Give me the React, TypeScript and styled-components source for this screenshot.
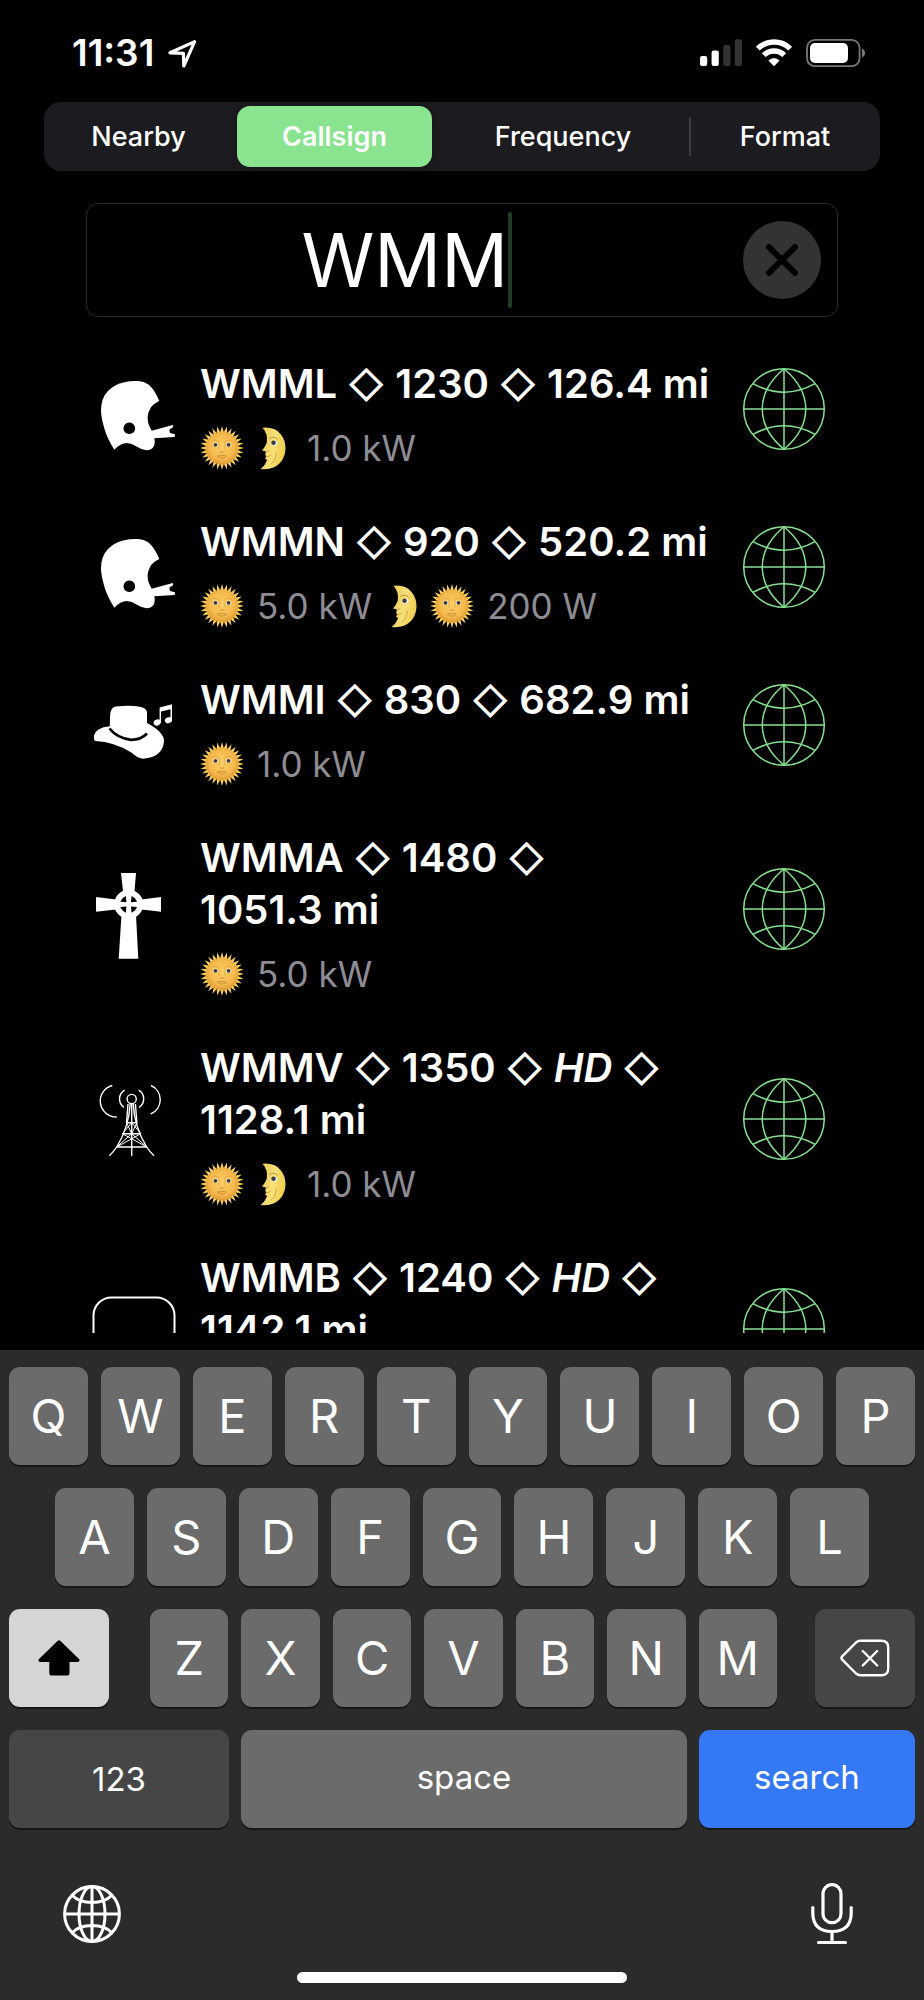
import React from 'react';
import styled, { createGlobalStyle } from 'styled-components';

const GlobalStyle = createGlobalStyle`
  * { box-sizing: border-box; }
  body { margin: 0; background: #000; }
  button, input { font: inherit; color: inherit; border: 0; padding: 0; margin: 0; background: none; }
  button { cursor: pointer; }
  svg { display: block; flex: none; overflow: visible; }
`;

const Screen = styled.div`
  display: flex;
  flex-direction: column;
  height: 100vh;
  background: #000;
  color: #fff;
  font-family: Inter, 'Noto Sans', sans-serif;
`;

const StatusBar = styled.header`
  display: flex;
  align-items: center;
  flex: none;
  height: 102px;
  padding: 3px 59px 0 72px;
`;

const Clock = styled.time`
  font-size: 37px;
  font-weight: 600;
  line-height: 44px;
  margin-right: 12px;
`;

const StatusIcons = styled.div`
  display: flex;
  align-items: center;
  gap: 14px;
  margin-left: auto;
`;

const Segments = styled.nav`
  display: grid;
  grid-template-columns: 189fr 203fr 254fr 190fr;
  flex: none;
  height: 69px;
  margin: 0 44px;
  padding: 4px 0;
  border-radius: 17px;
  background: #1c1b20;
`;

const Segment = styled.button<{ $active?: boolean; $divided?: boolean }>`
  position: relative;
  margin: 0 4px;
  border-radius: 13px;
  background: ${p => (p.$active ? '#8ae38f' : 'transparent')};
  box-shadow: ${p => (p.$active ? '0 0 8px rgba(0, 0, 0, 0.3)' : 'none')};
  font-size: 27px;
  line-height: 36px;
  font-weight: ${p => (p.$active ? 600 : 500)};

  &::before {
    content: '';
    display: ${p => (p.$divided ? 'block' : 'none')};
    position: absolute;
    left: -5px;
    top: 11px;
    bottom: 11px;
    width: 2px;
    background: #3e3d43;
  }
`;

const SearchBox = styled.form`
  display: flex;
  align-items: center;
  flex: none;
  height: 114px;
  margin: 32px 86px 0;
  padding: 0 16px;
  border: 1px solid #2a2a2a;
  border-radius: 12px;
`;

const Field = styled.label`
  display: flex;
  flex: 1;
  align-items: center;
  justify-content: center;
  padding-right: 34px;
`;

const SearchInput = styled.input`
  width: 208px;
  height: 96px;
  outline: none;
  font-size: 74px;
  text-align: right;
  caret-color: transparent;
`;

const Caret = styled.span`
  width: 4px;
  height: 96px;
  border-radius: 2px;
  background: #213a25;
`;

const ClearButton = styled.button`
  width: 78px;
  height: 78px;
  border-radius: 50%;
  background: #333;
`;

const StationList = styled.ul`
  flex: 1 1 0;
  min-height: 0;
  overflow: hidden;
  margin: 13px 0 17px;
  padding: 0 98px 0 92px;
  list-style: none;
`;

const Station = styled.li`
  display: flex;
  align-items: center;
`;

const StationText = styled.div`
  flex: 1;
  min-width: 0;
  padding: 28px 16px 16px 24px;
`;

const StationTitle = styled.h2`
  margin: 0 0 14px;
  font-size: 40px;
  line-height: 52px;
  font-weight: 600;
`;

const Diamond = styled.span`
  font-size: 36px;
  font-weight: 500;
  line-height: 1;
`;

const PowerLine = styled.div`
  display: flex;
  align-items: center;
  gap: 13px;
  height: 48px;
  color: #8e8d93;
  font-size: 35px;
  line-height: 48px;
  white-space: nowrap;
`;

const EmojiGroup = styled.span<{ $gap: number }>`
  display: flex;
  gap: ${p => p.$gap}px;
`;

const GlobeLink = styled.a`
  display: block;
  color: #86e290;
`;

const Keyboard = styled.section`
  display: flex;
  flex-direction: column;
  flex: none;
  gap: 23px;
  padding: 17px 9px;
  background: #2b2b2b;
`;

const KeyRow = styled.div<{ $inset?: number; $gap?: number }>`
  display: flex;
  gap: ${p => p.$gap ?? 13}px;
  padding: 0 ${p => p.$inset ?? 0}px;
`;

const LetterGroup = styled.div`
  display: flex;
  flex: 1;
  gap: 13px;
  margin: 0 25px 0 28px;
`;

const keyTones = {
  letter: '#6b6b6b',
  dark: '#464646',
  light: '#d5d5d5',
  blue: '#3478f6',
};

const Key = styled.button<{ $tone?: keyof typeof keyTones; $grow?: number; $width?: number; $word?: boolean }>`
  display: flex;
  align-items: center;
  justify-content: center;
  flex: ${p => (p.$width ? `0 0 ${p.$width}px` : `${p.$grow ?? 1} 1 0`)};
  min-width: 0;
  height: 98px;
  padding-bottom: ${p => (p.$word ? 4 : 0)}px;
  border-radius: 11px;
  background: ${p => keyTones[p.$tone ?? 'letter']};
  box-shadow: 0 2px 0 #171717;
  font-size: ${p => (p.$grow ? 33 : 47)}px;
  line-height: 56px;
`;

const KeyboardFooter = styled.div`
  display: flex;
  align-items: center;
  justify-content: space-between;
  height: 76px;
  margin-top: 25px;
  padding: 0 62px 0 54px;
`;

const HomeIndicator = styled.div`
  align-self: center;
  width: 330px;
  max-width: 100%;
  height: 11px;
  margin-top: -3px;
  border-radius: 6px;
  background: #fff;
`;

const LocationIcon = () => (
  <svg width="32" height="32" viewBox="0 0 32 32" fill="none" stroke="#fff" strokeWidth="3.2" strokeLinejoin="round">
    <path d="M28.6 4.6 4 15.8 17.4 16.4 17.8 29Z" />
  </svg>
);

const SignalIcon = () => (
  <svg width="42" height="28" viewBox="0 0 42 28">
    <rect x="0" y="17" width="7.2" height="10" rx="2" fill="#fff" />
    <rect x="11.6" y="11.5" width="7.2" height="15.5" rx="2" fill="#fff" />
    <rect x="23.2" y="6" width="7.2" height="21" rx="2" fill="#333" />
    <rect x="34.8" y="0.3" width="7.2" height="26.7" rx="2" fill="#333" />
  </svg>
);

const WifiIcon = () => (
  <svg width="36" height="28" viewBox="0 0 36 28">
    <g fill="none" stroke="#fff" strokeWidth="5.4">
      <path d="M1.8 9.6A23 23 0 0 1 34.2 9.6" />
      <path d="M7.8 16.2A14.4 14.4 0 0 1 28.2 16.2" />
    </g>
    <path d="M12.4 21.6Q18 16.4 23.6 21.6L18.8 26.6Q18 27.4 17.2 26.6Z" fill="#fff" />
  </svg>
);

const BatteryIcon = () => (
  <svg width="59" height="28" viewBox="0 0 59 28">
    <rect x="1" y="0.8" width="52.6" height="26.4" rx="8" fill="none" stroke="#777" strokeWidth="1.8" />
    <rect x="4" y="4" width="38" height="20" rx="5" fill="#fff" />
    <path d="M56 9.5V18.5Q59 17 59 14T56 9.5Z" fill="#777" />
  </svg>
);

const ClearIcon = () => (
  <svg width="78" height="78" viewBox="0 0 78 78" stroke="#000" strokeWidth="6" strokeLinecap="round">
    <path d="M26 26 52 52M52 26 26 52" />
  </svg>
);

const WireGlobe = () => (
  <svg width="84" height="84" viewBox="0 0 84 84" fill="none" stroke="currentColor" strokeWidth="1.5">
    <circle cx="42" cy="42" r="40.3" />
    <path d="M42 1.7V82.3M1.7 42H82.3" />
    <path d="M42 1.7C13 26 13 58 42 82.3C71 58 71 26 42 1.7" />
    <path d="M11 16.7Q42 33.7 73 16.7M11 67.3Q42 50.3 73 67.3" />
  </svg>
);

const HelmetIcon = () => (
  <svg width="84" height="84" viewBox="0 0 84 84" fill="#fff">
    <path
      fillRule="evenodd"
      d="M22.3 82.7Q15 71 12.5 62Q9 50 9 44Q9 31 16 24Q22 17.5 31.3 15.4Q39 13.6 46.3 14Q52 14.4 56.5 17.4Q63 23 67.3 34Q60.5 37 58 42Q53.5 50 57.3 59L59.7 63.7L80.7 58L81.3 60L77.3 62.7L78 66L83 67.3L82.7 70L62.3 71.3Q64.5 82.5 54.7 83.3Q49 82.5 44.5 79.5Q33 71 22.3 82.7ZM37.3 55.5a5.8 5.8 0 1 0 .01 0Z"
    />
  </svg>
);

const HatIcon = () => (
  <svg width="84" height="84" viewBox="0 0 84 84" fill="#fff">
    <path d="M17.8 43.2L18 33Q18.5 24 24 23.6Q38 21.5 49 24Q55 25.5 55 29.5V40Q72 49 72 58Q71 74 51.3 75.7Q46 75.5 39.7 69.7Q23 59 3 58Q1.5 56 2 52.5Q4 44.5 17.8 43.2Z" />
    <path d="M17.5 45.5Q25 55 39 56.8Q49 56.8 55 50.5" fill="none" stroke="#000" strokeWidth="2.8" />
    <ellipse cx="65.2" cy="39.5" rx="3.7" ry="2.9" transform="rotate(-25 65.2 39.5)" />
    <ellipse cx="76.5" cy="37.2" rx="3.7" ry="2.9" transform="rotate(-25 76.5 37.2)" />
    <path d="M67.6 24.5 80 21.3V37.5H78.5V26.2L69 28.6V39.5H67.6Z" />
  </svg>
);

const CrossIcon = () => (
  <svg width="84" height="84" viewBox="0 0 84 84">
    <path d="M29 6H44L42.5 24H31Z M4 30 24 32.5V42.5L4 44.7Z M69 30 49.5 32.5V42.5L69 44.7Z M29.5 48H44L46.3 91.7H26.7Z" fill="#fff" />
    <circle cx="36.7" cy="37.3" r="11.6" fill="#000" stroke="#fff" strokeWidth="5.8" />
    <path d="M33.6 26H39.8L38.8 37.3 39.8 49H33.6L34.6 37.3ZM26 34.5 36.7 35.4 47.5 34.5V40.2L36.7 39.2 26 40.2Z" fill="#fff" />
  </svg>
);

const TowerIcon = () => (
  <svg width="84" height="84" viewBox="0 0 84 84" fill="none" stroke="#fff" strokeWidth="1.4">
    <circle cx="39.7" cy="22" r="4.6" />
    <path d="M32.7 13.2A10 10 0 0 0 32 30.3M46.7 13.2A10 10 0 0 1 47 30.3" />
    <path d="M20.3 8.5A16 16 0 0 0 24.7 40M59 8.5A15.5 15.5 0 0 1 58.7 37" />
    <path d="M38.2 27Q37 50 24.7 70Q21.5 75 17.3 78.7M41.2 27Q42.4 50 54.7 70Q57.9 75 62 78.7" />
    <path d="M39.7 27V78.7M36 27 34.5 45.7M43.4 27 44.9 45.7M34 45.7H45.4M30.5 56.7H48.9M24.7 70H54.7" />
    <path d="M34.5 45.7 39.7 56.7 44.9 45.7M30.5 56.7 54.7 70M48.9 56.7 24.7 70M30.5 56.7 39.7 45.7 48.9 56.7M24.7 70 39.7 56.7 54.7 70" strokeWidth="1" />
  </svg>
);

const ScreenIcon = () => (
  <svg width="84" height="84" viewBox="0 0 84 84" fill="none" stroke="#fff" strokeWidth="2">
    <rect x="1.500" y="10.500" width="81" height="62" rx="18" />
  </svg>
);

const sunRays = Array.from({ length: 28 }, (_, i) => (i * 360) / 28);

const Sun = () => (
  <svg width="44" height="44" viewBox="0 0 45 45" role="img" aria-label="Day">
    <defs>
      <radialGradient id="sunFace" cx="0.5" cy="0.45" r="0.55">
        <stop offset="0" stopColor="#fbcf66" />
        <stop offset="0.7" stopColor="#f5b94c" />
        <stop offset="1" stopColor="#e09a35" />
      </radialGradient>
    </defs>
    {sunRays.map(angle => (
      <path key={angle} d="M20.4 7.5 22.5 0 24.6 7.5Z" fill="#fad05a" transform={`rotate(${angle} 22.5 22.5)`} />
    ))}
    <circle cx="22.5" cy="22.5" r="16.6" fill="url(#sunFace)" />
    <ellipse cx="15.8" cy="19.3" rx="2.9" ry="2.3" fill="#fff0c8" />
    <ellipse cx="29.2" cy="19.3" rx="2.9" ry="2.3" fill="#fff0c8" />
    <circle cx="15.8" cy="19.3" r="2" fill="#3e3943" />
    <circle cx="29.2" cy="19.3" r="2" fill="#3e3943" />
    <g fill="none" stroke="#c58434" strokeWidth="0.8" strokeLinecap="round">
      <path d="M12 16Q15.5 13 19.5 16V24M33 16Q29.5 13 25.5 16V24" opacity="0.5" />
      <path d="M20.5 26.3Q22.5 28.3 24.5 26.3" />
      <path d="M18 31Q20.5 29.5 22.5 30.5Q24.5 29.5 27 31Q22.5 35 18 31" />
    </g>
  </svg>
);

const Moon = () => (
  <svg width="40" height="44" viewBox="0 0 40 44" role="img" aria-label="Night">
    <defs>
      <linearGradient id="moonFace" x1="0" y1="0" x2="1" y2="0.3">
        <stop offset="0" stopColor="#e8c74e" />
        <stop offset="0.6" stopColor="#f7e07a" />
        <stop offset="1" stopColor="#efcf52" />
      </linearGradient>
    </defs>
    <path
      d="M8.5 1.8Q20 0.5 26.5 8Q31.5 14 31.5 22Q31.5 31 26 37Q18.5 44.5 6.5 43Q11.5 39 13 34L11 32.5 12.5 30.5 11 28.5Q12.5 26.5 11.5 25.3L8 24.5Q11.5 20.5 12.8 16.5Q14 8 8.5 1.8Z"
      fill="url(#moonFace)"
    />
    <ellipse cx="20" cy="17" rx="3.4" ry="2.6" fill="#fff" />
    <circle cx="19.5" cy="16.8" r="2.3" fill="#3e3b36" />
    <path d="M15.5 12.5Q19.5 9.5 23.5 13" fill="none" stroke="#b8912f" strokeLinecap="round" />
    <path d="M12 30.5Q15.5 31.5 17 29M15 24.5Q13.5 26 12 25.5M22 27Q23 33 17 38" fill="none" stroke="#c89f37" strokeWidth="0.8" strokeLinecap="round" />
  </svg>
);

const ShiftIcon = () => (
  <svg width="42" height="38" viewBox="0 0 42 38">
    <path d="M19.8 1.7Q21 0.7 22.2 1.7L41 20Q42.5 22.3 40 23H31.5V34Q31.5 36.6 29 36.6H14Q11.3 36.6 11.3 34V23H2Q-0.5 22.3 1 20Z" fill="#000" />
  </svg>
);

const DeleteIcon = () => (
  <svg width="50" height="38" viewBox="0 0 50 38" fill="none" stroke="#fff" strokeWidth="2.4" strokeLinecap="round" strokeLinejoin="round">
    <path d="M20.5 1.8H41.5Q48.2 1.8 48.2 8.5V29.5Q48.2 36.2 41.5 36.2H20.5Q18 36.2 16 34.5L2.2 20.7Q0.7 19 2.2 17.3L16 3.5Q18 1.8 20.5 1.8Z" />
    <path d="M22.8 12 37.2 26.5M37.2 12 22.8 26.5" />
  </svg>
);

const KeyboardGlobeIcon = () => (
  <svg width="58" height="58" viewBox="0 0 58 58" fill="none" stroke="#fff" strokeWidth="3">
    <circle cx="29" cy="29" r="27.4" />
    <ellipse cx="29" cy="29" rx="13" ry="27.4" />
    <path d="M29 1.6V56.4M1.6 29H56.4M9.5 10.500Q16 17.500 29 17.500T48.500 10.500M9.500 47.500Q16 40.500 29 40.500T48.500 47.500" />
  </svg>
);

const MicIcon = () => (
  <svg width="42" height="62" viewBox="0 0 42 62" fill="none" stroke="#fff" strokeWidth="3.2" strokeLinecap="round">
    <rect x="12" y="1.700" width="18" height="38" rx="9" />
    <path d="M1.800 24.500V31Q2.500 48.500 21 48.500T40.200 31V24.500M21 48.500V59M7.500 59.500H34.500" />
  </svg>
);

type Emoji = 'sun' | 'moon';
type PowerPart = string | Emoji[];

interface StationData {
  icon: React.ComponentType;
  call: string;
  frequency: string;
  hd?: boolean;
  distance: string;
  power: PowerPart[];
}

const stations: StationData[] = [
  { icon: HelmetIcon, call: 'WMML', frequency: '1230', distance: '126.4', power: [['sun', 'moon'], '1.0 kW'] },
  { icon: HelmetIcon, call: 'WMMN', frequency: '920', distance: '520.2', power: [['sun'], '5.0 kW', ['moon', 'sun'], '200 W'] },
  { icon: HatIcon, call: 'WMMI', frequency: '830', distance: '682.9', power: [['sun'], '1.0 kW'] },
  { icon: CrossIcon, call: 'WMMA', frequency: '1480', distance: '1051.3', power: [['sun'], '5.0 kW'] },
  { icon: TowerIcon, call: 'WMMV', frequency: '1350', hd: true, distance: '1128.1', power: [['sun', 'moon'], '1.0 kW'] },
  { icon: ScreenIcon, call: 'WMMB', frequency: '1240', hd: true, distance: '1142.1', power: [['sun', 'moon'], '1.0 kW'] },
];

const StationRow = ({ icon: Icon, call, frequency, hd, distance, power }: StationData) => (
  <Station>
    <Icon />
    <StationText>
      <StationTitle>
        {call} <Diamond>◇</Diamond> {frequency} <Diamond>◇</Diamond>{' '}
        {hd && <><em>HD</em> <Diamond>◇</Diamond> </>}
        {distance}&nbsp;mi
      </StationTitle>
      <PowerLine>
        {power.map((part, i) =>
          typeof part === 'string' ? (
            <span key={i}>{part}</span>
          ) : (
            <EmojiGroup key={i} $gap={part[0] === 'moon' ? 5 : 10}>
              {part.map(name => (name === 'sun' ? <Sun key={name} /> : <Moon key={name} />))}
            </EmojiGroup>
          ),
        )}
      </PowerLine>
    </StationText>
    <GlobeLink href="#" aria-label={`Open ${call} website`}>
      <WireGlobe />
    </GlobeLink>
  </Station>
);

const letterKeys = (letters: string) => letters.split('').map(letter => <Key key={letter}>{letter}</Key>);

export default function App() {
  const [query, setQuery] = React.useState('WMM');
  return (
    <Screen>
      <GlobalStyle />
      <StatusBar>
        <Clock>11:31</Clock>
        <LocationIcon />
        <StatusIcons>
          <SignalIcon />
          <WifiIcon />
          <BatteryIcon />
        </StatusIcons>
      </StatusBar>
      <Segments aria-label="Search by">
        <Segment>Nearby</Segment>
        <Segment $active aria-current="true">Callsign</Segment>
        <Segment>Frequency</Segment>
        <Segment $divided>Format</Segment>
      </Segments>
      <SearchBox onSubmit={e => e.preventDefault()}>
        <Field>
          <SearchInput aria-label="Callsign" value={query} onChange={e => setQuery(e.target.value)} />
          <Caret />
        </Field>
        <ClearButton type="button" aria-label="Clear" onClick={() => setQuery('')}>
          <ClearIcon />
        </ClearButton>
      </SearchBox>
      <StationList>
        {stations.map(station => (
          <StationRow key={station.call} {...station} />
        ))}
      </StationList>
      <Keyboard aria-label="Keyboard">
        <KeyRow>{letterKeys('QWERTYUIOP')}</KeyRow>
        <KeyRow $inset={46}>{letterKeys('ASDFGHJKL')}</KeyRow>
        <KeyRow>
          <Key $tone="light" $width={100} aria-label="Shift"><ShiftIcon /></Key>
          <LetterGroup>{letterKeys('ZXCVBNM')}</LetterGroup>
          <Key $tone="dark" $width={100} aria-label="Delete"><DeleteIcon /></Key>
        </KeyRow>
        <KeyRow $gap={12}>
          <Key $tone="dark" $grow={220}>123</Key>
          <Key $grow={446} $word>space</Key>
          <Key $tone="blue" $grow={216} $word>search</Key>
        </KeyRow>
        <KeyboardFooter>
          <button type="button" aria-label="Next keyboard"><KeyboardGlobeIcon /></button>
          <button type="button" aria-label="Dictate"><MicIcon /></button>
        </KeyboardFooter>
        <HomeIndicator />
      </Keyboard>
    </Screen>
  );
}
